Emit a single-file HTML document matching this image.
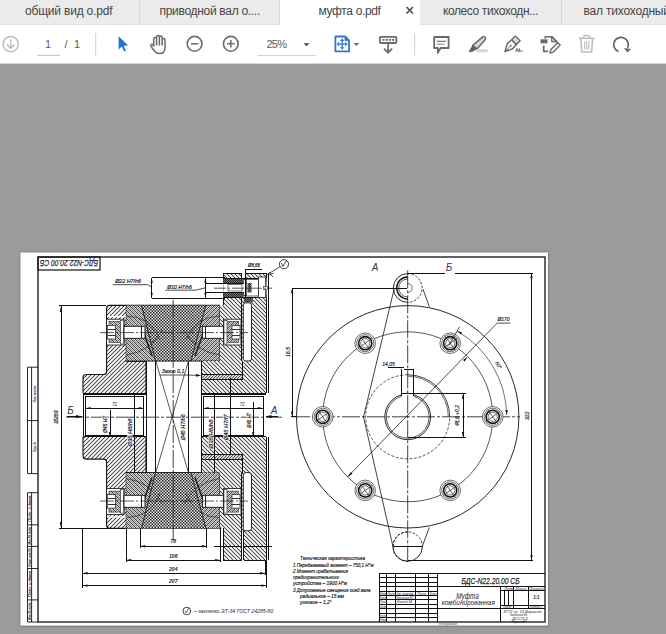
<!DOCTYPE html>
<html><head><meta charset="utf-8">
<style>
*{margin:0;padding:0;box-sizing:border-box}
html,body{width:666px;height:634px;overflow:hidden;background:#9b9b9b;font-family:"Liberation Sans",sans-serif}
#tabs{position:absolute;left:0;top:0;width:666px;height:25px;background:#ebebeb;border-bottom:1px solid #dedede}
.tab{position:absolute;top:0;height:25px;font-size:12px;letter-spacing:-0.2px;color:#464646;line-height:25px;white-space:nowrap;overflow:hidden}
.tab span{position:absolute;top:-1px}
.tab.sep{border-right:1px solid #d6d6d6}
.tab.active{background:#fff;height:26px}
#tb{position:absolute;left:0;top:25px;width:666px;height:39px;background:#fff;border-bottom:1px solid #d6d6d6}
#page{position:absolute;left:20px;top:252px;width:529px;height:375px;background:#fff;box-shadow:1px 1px 1px rgba(0,0,0,.3)}
svg{position:absolute;left:0;top:0}
</style></head><body>
<div id="tabs">
 <div class="tab sep" style="left:0;width:140px"><span style="left:25px">общий вид о.pdf</span></div>
 <div class="tab sep" style="left:140px;width:140px"><span style="left:19.5px;letter-spacing:-0.3px">приводной вал о....</span></div>
 <div class="tab active" style="left:280px;width:140px"><span style="left:38.5px;letter-spacing:-0.35px">муфта о.pdf</span></div>
 <div class="tab sep" style="left:420px;width:142px"><span style="left:23px;letter-spacing:-0.4px">колесо тихоходн...</span></div>
 <div class="tab" style="left:562px;width:104px"><span style="left:21.5px">вал тихоходный</span></div>
</div>
<div id="tb"></div>
<svg width="666" height="64" style="pointer-events:none">
 <!-- close x -->
 <path d="M406.5 7 L413 13.5 M413 7 L406.5 13.5" stroke="#4a4a4a" stroke-width="1.6"/>
 <!-- toolbar -->
 <g transform="translate(0,0)">
  <circle cx="10.7" cy="44.2" r="7.6" fill="none" stroke="#bcbcbc" stroke-width="1.5"/>
  <path d="M10.7 39.5 V48 M7 44.6 L10.7 48.3 L14.4 44.6" fill="none" stroke="#bcbcbc" stroke-width="1.5"/>
  <line x1="37" y1="55.3" x2="60" y2="55.3" stroke="#bdbdbd" stroke-width="1"/>
  <line x1="95.7" y1="33" x2="95.7" y2="55.5" stroke="#d0d0d0" stroke-width="1"/>
  <path d="M118.6 36.3 L118.6 49.6 L121.8 46.6 L124.2 51.6 L126 50.7 L123.7 45.7 L128.2 45.5 Z" fill="#2375d4"/>
  <!-- hand -->
  <path d="M153.8,46.5 V38.9 a1.4,1.4 0 0 1 2.8,0 V45 V36.9 a1.4,1.4 0 0 1 2.8,0 V45 V37.5 a1.4,1.4 0 0 1 2.8,0 V45 V39.8 a1.4,1.4 0 0 1 2.8,0 V47.5 C165,51.3 162.8,53.6 159.4,53.6 C157,53.6 155.6,52.6 154.2,50.8 L150.9,46.2 C150.1,45 151.5,43.5 152.7,44.7 L153.8,46.5" fill="none" stroke="#6a6a6a" stroke-width="1.5" stroke-linejoin="round"/>
  <circle cx="194.6" cy="43.8" r="7.4" fill="none" stroke="#6e6e6e" stroke-width="1.6"/>
  <line x1="191" y1="43.8" x2="198.3" y2="43.8" stroke="#6e6e6e" stroke-width="1.6"/>
  <circle cx="230.8" cy="43.8" r="7.4" fill="none" stroke="#6e6e6e" stroke-width="1.6"/>
  <path d="M227 43.8 H234.6 M230.8 40 V47.6" stroke="#6e6e6e" stroke-width="1.6"/>
  <line x1="257.5" y1="55.6" x2="316" y2="55.6" stroke="#cfcfcf" stroke-width="1"/>
  <path d="M303.6 43.2 H309.4 L306.5 46.2 Z" fill="#4a4a4a"/>
  <!-- blue page -->
  <path d="M335.4 36.5 H345.2 L349 40.3 V51.4 H335.4 Z" fill="none" stroke="#2a78d4" stroke-width="1.8" stroke-linejoin="round"/>
  <path d="M345 36.6 L348.9 40.5 H345 Z" fill="#2a78d4" stroke="#2a78d4" stroke-width="0.9" stroke-linejoin="round"/>
  <path d="M342.2 38.6 L344.5 41 H339.9 Z M342.2 49.6 L344.5 47.2 H339.9 Z M336.7 44.1 L339.1 41.8 V46.4 Z M347.7 44.1 L345.3 41.8 V46.4 Z" fill="#2a78d4"/>
  <path d="M342.2 40.5 V47.7 M338.6 44.1 H345.8" stroke="#2a78d4" stroke-width="1.3"/>
  <path d="M353.5 43 H359.3 L356.4 46 Z" fill="#2a78d4"/>
  <!-- stamp -->
  <rect x="379.8" y="36.8" width="16.6" height="6.2" rx="0.9" fill="none" stroke="#6a6a6a" stroke-width="1.8"/>
  <path d="M382.4 39.9 H394.2" stroke="#6a6a6a" stroke-width="1.9" stroke-dasharray="2.2 1"/>
  <path d="M388.1 43.2 V52.3 M384 48.6 L388.1 52.7 L392.2 48.6" fill="none" stroke="#6a6a6a" stroke-width="1.7"/>
  <line x1="414.6" y1="33" x2="414.6" y2="55.5" stroke="#d0d0d0" stroke-width="1"/>
  <!-- comment -->
  <path d="M434.2 37 H448.6 V48 H440.6 L437.8 52.8 V48 H434.2 Z" fill="none" stroke="#6a6a6a" stroke-width="1.8" stroke-linejoin="round"/>
  <line x1="436.8" y1="41.3" x2="446" y2="41.3" stroke="#6a6a6a" stroke-width="1.1"/>
  <line x1="436.8" y1="44.2" x2="444.5" y2="44.2" stroke="#a0a0a0" stroke-width="1.4"/>
  <!-- highlighter -->
  <path d="M472.6 45.6 L482.6 36.9 C483.8 35.9 486.4 37.9 485.5 39.3 L477 48.9 Z" fill="#dadada" stroke="#6a6a6a" stroke-width="1.5" stroke-linejoin="round"/>
  <path d="M472.6 45.6 L469 51.6 L471.6 51.8 L477 48.9 Z" fill="#5e5e5e" stroke="#5e5e5e" stroke-width="0.6" stroke-linejoin="round"/>
  <rect x="476.5" y="49.3" width="11" height="3" fill="#d6d6d6"/>
  <!-- pen nib -->
  <path d="M505 51.5 L507.4 43.6 L511.6 39.7 L516.4 44.5 L512.6 48.8 Z" fill="none" stroke="#6a6a6a" stroke-width="1.5" stroke-linejoin="round"/>
  <path d="M511.6 39.7 L515.3 36 L520.1 40.8 L516.4 44.5 Z" fill="#d8d8d8" stroke="#6a6a6a" stroke-width="1.3" stroke-linejoin="round"/>
  <path d="M505 51.5 L510.2 46.3" stroke="#6a6a6a" stroke-width="1"/>
  <circle cx="510.7" cy="45.8" r="1" fill="#6a6a6a"/>
  <path d="M515.6 51.8 L517.2 48.3 L518.8 51.8 M516.2 50.6 H518.2 M519.6 51.8 V48.3 M520.3 51.8 C521.2 49.9 522.4 50.4 522.7 51.8" fill="none" stroke="#6a6a6a" stroke-width="1"/>
  <!-- doc edit -->
  <path d="M545.2 38.6 V36.7 H552 L556.6 41.3 V43.3" fill="none" stroke="#6a6a6a" stroke-width="1.6" stroke-linejoin="round"/>
  <path d="M551.7 36.9 V41.5 H556.4 Z" fill="#fff" stroke="#6a6a6a" stroke-width="1.3" stroke-linejoin="round"/>
  <rect x="540.5" y="39.3" width="7" height="4" fill="#6a6a6a"/>
  <path d="M543.7 45.4 V51.4 H548.2" fill="none" stroke="#6a6a6a" stroke-width="1.7"/>
  <path d="M550 53 L550.9 49.6 L557.8 42.7 L560.2 45.1 L553.3 52.1 Z" fill="none" stroke="#6a6a6a" stroke-width="1.4" stroke-linejoin="round"/>
  <!-- trash -->
  <path d="M578.8 38.3 H594.6" stroke="#bdbdbd" stroke-width="1.6"/>
  <path d="M583.8 38.2 V35.6 H589.6 V38.2" fill="none" stroke="#bdbdbd" stroke-width="1.2"/>
  <path d="M580.8 39 L581.8 52 H591.6 L592.6 39" fill="none" stroke="#bdbdbd" stroke-width="1.6" stroke-linejoin="round"/>
  <path d="M584.6 41.2 V49.6 M586.7 41.2 V49.6 M588.8 41.2 V49.6" stroke="#bdbdbd" stroke-width="1.1"/>
  <!-- rotate -->
  <path d="M618.6 51.5 A7.3 7.3 0 1 1 627.6 47.8" fill="none" stroke="#666" stroke-width="1.7"/>
  <path d="M624 48 L631 49 L627.5 52.5 Z" fill="#666"/>
 </g>
</svg>
<div style="position:absolute;left:45px;top:38px;font-size:11px;color:#5a5a5a;line-height:13px">1</div>
<div style="position:absolute;left:64.5px;top:38px;font-size:11px;color:#5a5a5a;line-height:13px">/</div>
<div style="position:absolute;left:74px;top:38px;font-size:11px;color:#5a5a5a;line-height:13px">1</div>
<div style="position:absolute;left:266.5px;top:38px;font-size:11px;letter-spacing:-0.8px;color:#5a5a5a;line-height:13px">25%</div>
<svg width="666" height="634" viewBox="0 0 666 634" style="position:absolute;left:0;top:0">
<defs>
<pattern id="hf" width="4" height="4" patternUnits="userSpaceOnUse"><rect x="0" y="0" width="1" height="1" fill="#d8d8d8"/><rect x="1" y="0" width="1" height="1" fill="#484848"/><rect x="2" y="0" width="1" height="1" fill="#d8d8d8"/><rect x="3" y="0" width="1" height="1" fill="#ffffff"/><rect x="0" y="1" width="1" height="1" fill="#484848"/><rect x="1" y="1" width="1" height="1" fill="#d8d8d8"/><rect x="2" y="1" width="1" height="1" fill="#ffffff"/><rect x="3" y="1" width="1" height="1" fill="#d8d8d8"/><rect x="0" y="2" width="1" height="1" fill="#d8d8d8"/><rect x="1" y="2" width="1" height="1" fill="#ffffff"/><rect x="2" y="2" width="1" height="1" fill="#d8d8d8"/><rect x="3" y="2" width="1" height="1" fill="#484848"/><rect x="0" y="3" width="1" height="1" fill="#ffffff"/><rect x="1" y="3" width="1" height="1" fill="#d8d8d8"/><rect x="2" y="3" width="1" height="1" fill="#484848"/><rect x="3" y="3" width="1" height="1" fill="#d8d8d8"/></pattern>
<pattern id="hb" width="4" height="4" patternUnits="userSpaceOnUse"><rect x="0" y="0" width="1" height="1" fill="#d8d8d8"/><rect x="1" y="0" width="1" height="1" fill="#484848"/><rect x="2" y="0" width="1" height="1" fill="#d8d8d8"/><rect x="3" y="0" width="1" height="1" fill="#ffffff"/><rect x="0" y="1" width="1" height="1" fill="#ffffff"/><rect x="1" y="1" width="1" height="1" fill="#d8d8d8"/><rect x="2" y="1" width="1" height="1" fill="#484848"/><rect x="3" y="1" width="1" height="1" fill="#d8d8d8"/><rect x="0" y="2" width="1" height="1" fill="#d8d8d8"/><rect x="1" y="2" width="1" height="1" fill="#ffffff"/><rect x="2" y="2" width="1" height="1" fill="#d8d8d8"/><rect x="3" y="2" width="1" height="1" fill="#484848"/><rect x="0" y="3" width="1" height="1" fill="#484848"/><rect x="1" y="3" width="1" height="1" fill="#d8d8d8"/><rect x="2" y="3" width="1" height="1" fill="#ffffff"/><rect x="3" y="3" width="1" height="1" fill="#d8d8d8"/></pattern>
<pattern id="ff" width="4" height="4" patternUnits="userSpaceOnUse"><rect x="0" y="0" width="1" height="1" fill="#d0d0d0"/><rect x="1" y="0" width="1" height="1" fill="#909090"/><rect x="2" y="0" width="1" height="1" fill="#d0d0d0"/><rect x="3" y="0" width="1" height="1" fill="#404040"/><rect x="0" y="1" width="1" height="1" fill="#909090"/><rect x="1" y="1" width="1" height="1" fill="#d0d0d0"/><rect x="2" y="1" width="1" height="1" fill="#404040"/><rect x="3" y="1" width="1" height="1" fill="#d0d0d0"/><rect x="0" y="2" width="1" height="1" fill="#d0d0d0"/><rect x="1" y="2" width="1" height="1" fill="#404040"/><rect x="2" y="2" width="1" height="1" fill="#d0d0d0"/><rect x="3" y="2" width="1" height="1" fill="#909090"/><rect x="0" y="3" width="1" height="1" fill="#404040"/><rect x="1" y="3" width="1" height="1" fill="#d0d0d0"/><rect x="2" y="3" width="1" height="1" fill="#909090"/><rect x="3" y="3" width="1" height="1" fill="#d0d0d0"/></pattern>
<pattern id="fb" width="4" height="4" patternUnits="userSpaceOnUse"><rect x="0" y="0" width="1" height="1" fill="#404040"/><rect x="1" y="0" width="1" height="1" fill="#d0d0d0"/><rect x="2" y="0" width="1" height="1" fill="#909090"/><rect x="3" y="0" width="1" height="1" fill="#d0d0d0"/><rect x="0" y="1" width="1" height="1" fill="#d0d0d0"/><rect x="1" y="1" width="1" height="1" fill="#404040"/><rect x="2" y="1" width="1" height="1" fill="#d0d0d0"/><rect x="3" y="1" width="1" height="1" fill="#909090"/><rect x="0" y="2" width="1" height="1" fill="#909090"/><rect x="1" y="2" width="1" height="1" fill="#d0d0d0"/><rect x="2" y="2" width="1" height="1" fill="#404040"/><rect x="3" y="2" width="1" height="1" fill="#d0d0d0"/><rect x="0" y="3" width="1" height="1" fill="#d0d0d0"/><rect x="1" y="3" width="1" height="1" fill="#909090"/><rect x="2" y="3" width="1" height="1" fill="#d0d0d0"/><rect x="3" y="3" width="1" height="1" fill="#404040"/></pattern>
<pattern id="kn" width="3" height="3" patternUnits="userSpaceOnUse"><rect x="0" y="0" width="1" height="1" fill="#1c1c1c"/><rect x="1" y="0" width="1" height="1" fill="#8a8a8a"/><rect x="2" y="0" width="1" height="1" fill="#f2f2f2"/><rect x="0" y="1" width="1" height="1" fill="#8a8a8a"/><rect x="1" y="1" width="1" height="1" fill="#8a8a8a"/><rect x="2" y="1" width="1" height="1" fill="#8a8a8a"/><rect x="0" y="2" width="1" height="1" fill="#f2f2f2"/><rect x="1" y="2" width="1" height="1" fill="#8a8a8a"/><rect x="2" y="2" width="1" height="1" fill="#1c1c1c"/></pattern>
<pattern id="dk" width="2" height="2" patternUnits="userSpaceOnUse"><rect x="0" y="0" width="1" height="1" fill="#2a2a2a"/><rect x="1" y="0" width="1" height="1" fill="#707070"/><rect x="0" y="1" width="1" height="1" fill="#707070"/><rect x="1" y="1" width="1" height="1" fill="#2a2a2a"/></pattern><pattern id="bush" width="3" height="3" patternUnits="userSpaceOnUse"><rect x="0" y="0" width="1" height="1" fill="#5a5a5a"/><rect x="1" y="0" width="1" height="1" fill="#c0c0c0"/><rect x="2" y="0" width="1" height="1" fill="#e8e8e8"/><rect x="0" y="1" width="1" height="1" fill="#c0c0c0"/><rect x="1" y="1" width="1" height="1" fill="#e8e8e8"/><rect x="2" y="1" width="1" height="1" fill="#5a5a5a"/><rect x="0" y="2" width="1" height="1" fill="#e8e8e8"/><rect x="1" y="2" width="1" height="1" fill="#5a5a5a"/><rect x="2" y="2" width="1" height="1" fill="#c0c0c0"/></pattern>
</defs>

<rect x="20" y="252" width="528.5" height="374" fill="#fff" stroke="#7a7a7a" stroke-width="0.8"/><path d="M548.6,253 V626.6 H21" fill="none" stroke="#808080" stroke-width="1"/>
<rect x="38" y="257" width="507" height="365" fill="none" stroke="#111" stroke-width="1.3"/>
<rect x="38" y="257" width="62" height="13" fill="none" stroke="#111" stroke-width="1.2"/>
<text transform="translate(69,263.4) rotate(180)" text-anchor="middle" dominant-baseline="central" font-family="Liberation Sans" font-style="italic" font-size="9.8" fill="#223" stroke="#223" stroke-width="0.25" textLength="58" lengthAdjust="spacingAndGlyphs">БДС-N22.20.00 СБ</text>
<path d="M27.5 367.2 H38 M27.5 420.6 H38 M27.5 473.6 H38 M27.5 367.2 V473.6 M31.6 367.2 V473.6" stroke="#111" stroke-width="0.9" fill="none"/>
<path d="M27.5 492.7 H38 M27.5 524.8 H38 M27.5 546.4 H38 M27.5 568.5 H38 M27.5 599.9 H38 M27.5 492.7 V622 M31.6 492.7 V622 M27.5 622 H38" stroke="#111" stroke-width="0.9" fill="none"/>
<text transform="translate(36.2,394) rotate(-90)" text-anchor="middle" font-family="Liberation Sans" font-style="italic" font-size="4.2" fill="#334" stroke="#334" stroke-width="0.12" textLength="17" lengthAdjust="spacingAndGlyphs">Перв. примен.</text>
<text transform="translate(36.2,447) rotate(-90)" text-anchor="middle" font-family="Liberation Sans" font-style="italic" font-size="4.2" fill="#334" stroke="#334" stroke-width="0.12" textLength="10" lengthAdjust="spacingAndGlyphs">Справ. №</text>
<text transform="translate(31.2,508.7) rotate(-90)" text-anchor="middle" font-family="Liberation Sans" font-style="italic" font-size="4.2" fill="#334" stroke="#334" stroke-width="0.15" textLength="26" lengthAdjust="spacingAndGlyphs">Подп. и дата</text>
<text transform="translate(31.2,535.6) rotate(-90)" text-anchor="middle" font-family="Liberation Sans" font-style="italic" font-size="4.2" fill="#334" stroke="#334" stroke-width="0.15" textLength="18" lengthAdjust="spacingAndGlyphs">Инв.№ дубл.</text>
<text transform="translate(31.2,557.4) rotate(-90)" text-anchor="middle" font-family="Liberation Sans" font-style="italic" font-size="4.2" fill="#334" stroke="#334" stroke-width="0.15" textLength="18" lengthAdjust="spacingAndGlyphs">Взам. инв.№</text>
<text transform="translate(31.2,584.2) rotate(-90)" text-anchor="middle" font-family="Liberation Sans" font-style="italic" font-size="4.2" fill="#334" stroke="#334" stroke-width="0.15" textLength="26" lengthAdjust="spacingAndGlyphs">Подп. и дата</text>
<text transform="translate(31.2,611) rotate(-90)" text-anchor="middle" font-family="Liberation Sans" font-style="italic" font-size="4.2" fill="#334" stroke="#334" stroke-width="0.15" textLength="18" lengthAdjust="spacingAndGlyphs">Инв.№ подл.</text>
<path d="M106.6,308.4 Q106.6,305.4 109.6,305.4 H126.3 V361.1 H146 V393.1 H83 V377.5 Q83,374.5 86,374.5 H103.6 Q106.6,374.5 106.6,371.5 Z" fill="url(#hf)"/>
<path d="M106.6,308.4 Q106.6,305.4 109.6,305.4 H220 M126.3,305.4 V361.1 H146 V393.1 M83,393.1 V377.5 Q83,374.5 86,374.5 H103.6 Q106.6,374.5 106.6,371.5 V308.4" fill="none" stroke="#111" stroke-width="1.1" />
<rect x="107.2" y="316" width="18.6" height="1.2" fill="#fff"/>
<rect x="221" y="316" width="19.6" height="1.2" fill="#fff"/>
<path d="M126.3,305.4 H141.5 L155.5,361.1 H126.3 Z" fill="url(#fb)"/>
<path d="M205.9,305.4 H219.9 V361.1 H191 Z" fill="url(#ff)"/>
<path d="M141.5,305.4 H205.9 L191,361.1 H155.5 Z" fill="url(#kn)"/>
<path d="M141.5,305.4 L155.5,361.1 M205.9,305.4 L191,361.1 M126.3,361.1 H219.9 V305.4" fill="none" stroke="#111" stroke-width="0.9" />
<path d="M126.3,316 Q150,316 160,340 M126.3,355 Q150,352 162,330 M219.9,316 Q196,316 186,340 M219.9,355 Q196,352 184,330" fill="none" stroke="#333" stroke-width="0.75" />
<path d="M141.5,326 L152,356 M205.9,326 L195,356" fill="none" stroke="#222" stroke-width="1.6" />
<path d="M220,305.4 H223.3 V273.3 H266.4 V393.1 H201.4 V361.1 H220 Z" fill="url(#hb)"/>
<rect x="201.4" y="374.2" width="41.5" height="4.8" fill="url(#bush)"/>
<path d="M201.4,374.2 H242.9 V361.1 M201.4,379 H242.9 V374.2 M201.4,361.1 V393.1 H266.4 M266.4,273.3 V393.1 M223.3,273.3 H241.6 M245.2,273.3 H266.4 M223.3,273.3 V305.4" fill="none" stroke="#111" stroke-width="1.0" shape-rendering="crispEdges" />
<path d="M268.2,273.3 V393.1" fill="none" stroke="#111" stroke-width="1.0" shape-rendering="crispEdges" />
<rect x="243.3" y="302.8" width="8.2" height="58.19999999999999" rx="2.5" fill="#fff" stroke="#111" stroke-width="0.9"/>
<path d="M241.4,278 V361.1" fill="none" stroke="#111" stroke-width="1.0" shape-rendering="crispEdges" />
<rect x="106.6" y="319.2" width="17.6" height="25.80000000000001" fill="#fff" stroke="#111" stroke-width="0.8"/>
<rect x="109" y="321.5" width="13" height="21" fill="url(#fb)" stroke="#222" stroke-width="0.6"/>
<rect x="107.5" y="325.5" width="8" height="13.5" fill="#fff" stroke="#222" stroke-width="0.7"/>
<path d="M107.5,329 H115.5 M107.5,335.5 H115.5" fill="none" stroke="#333" stroke-width="1.0" shape-rendering="crispEdges" />
<rect x="120.5" y="320.5" width="3" height="23.5" fill="#fff" stroke="#222" stroke-width="0.6"/>
<rect x="124" y="326.3" width="21" height="12" fill="#fff" stroke="#111" stroke-width="0.9"/>
<path d="M141,326.3 V338.3" fill="none" stroke="#222" stroke-width="1.0" shape-rendering="crispEdges" />
<rect x="223.5" y="319.2" width="17.5" height="25.80000000000001" fill="#fff" stroke="#111" stroke-width="0.8"/>
<rect x="225.5" y="321.5" width="13" height="21" fill="url(#ff)" stroke="#222" stroke-width="0.6"/>
<rect x="232" y="325.5" width="8" height="13.5" fill="#fff" stroke="#222" stroke-width="0.7"/>
<path d="M232,329 H240 M232,335.5 H240" fill="none" stroke="#333" stroke-width="1.0" shape-rendering="crispEdges" />
<rect x="224" y="320.5" width="3" height="23.5" fill="#fff" stroke="#222" stroke-width="0.6"/>
<rect x="202.4" y="326.3" width="21" height="12" fill="#fff" stroke="#111" stroke-width="0.9"/>
<path d="M205.4,326.3 V338.3" fill="none" stroke="#222" stroke-width="1.0" shape-rendering="crispEdges" />
<path d="M100,332.6 H248" fill="none" stroke="#222" stroke-width="0.75" stroke-dasharray="14 2 2 2"/>
<path d="M106.6,525.2 Q106.6,528.2 109.6,528.2 H126.3 V472.5 H146 V436.9 H83 V456.1 Q83,459.1 86,459.1 H103.6 Q106.6,459.1 106.6,462.1 Z" fill="url(#hf)"/>
<path d="M106.6,525.2 Q106.6,528.2 109.6,528.2 H220 M126.3,528.2 V472.5 H146 V436.9 M83,436.9 V456.1 Q83,459.1 86,459.1 H103.6 Q106.6,459.1 106.6,462.1 V525.2" fill="none" stroke="#111" stroke-width="1.1" />
<rect x="107.2" y="516.4" width="18.6" height="1.2" fill="#fff"/>
<rect x="221" y="516.4" width="19.6" height="1.2" fill="#fff"/>
<path d="M126.3,528.2 H141.5 L155.5,472.5 H126.3 Z" fill="url(#fb)"/>
<path d="M205.9,528.2 H219.9 V472.5 H191 Z" fill="url(#ff)"/>
<path d="M141.5,528.2 H205.9 L191,472.5 H155.5 Z" fill="url(#kn)"/>
<path d="M141.5,528.2 L155.5,472.5 M205.9,528.2 L191,472.5 M126.3,472.5 H219.9 V528.2" fill="none" stroke="#111" stroke-width="0.9" />
<path d="M126.3,517.6 Q150,517.6 160,493.6 M126.3,478.6 Q150,481.6 162,503.6 M219.9,517.6 Q196,517.6 186,493.6 M219.9,478.6 Q196,481.6 184,503.6" fill="none" stroke="#333" stroke-width="0.75" />
<path d="M141.5,507.6 L152,477.6 M205.9,507.6 L195,477.6" fill="none" stroke="#222" stroke-width="1.6" />
<path d="M220,528.2 H223.3 V560.3 H266.4 V436.9 H201.4 V472.5 H220 Z" fill="url(#hb)"/>
<rect x="201.4" y="454.6" width="41.5" height="4.8" fill="url(#bush)"/>
<path d="M201.4,459.4 H242.9 V472.5 M201.4,454.6 H242.9 V459.4 M201.4,472.5 V436.9 H266.4 M266.4,560.3 V436.9 M223.3,560.3 H241.6 M245.2,560.3 H266.4 M223.3,560.3 V528.2" fill="none" stroke="#111" stroke-width="1.0" shape-rendering="crispEdges" />
<path d="M268.2,560.3 V436.9" fill="none" stroke="#111" stroke-width="1.0" shape-rendering="crispEdges" />
<rect x="243.3" y="472.6" width="8.2" height="58.19999999999993" rx="2.5" fill="#fff" stroke="#111" stroke-width="0.9"/>
<path d="M241.4,555.6 V472.5" fill="none" stroke="#111" stroke-width="1.0" shape-rendering="crispEdges" />
<rect x="106.6" y="488.6" width="17.6" height="25.799999999999955" fill="#fff" stroke="#111" stroke-width="0.8"/>
<rect x="109" y="491.1" width="13" height="21" fill="url(#fb)" stroke="#222" stroke-width="0.6"/>
<rect x="107.5" y="494.6" width="8" height="13.5" fill="#fff" stroke="#222" stroke-width="0.7"/>
<path d="M107.5,504.6 H115.5 M107.5,498.1 H115.5" fill="none" stroke="#333" stroke-width="1.0" shape-rendering="crispEdges" />
<rect x="120.5" y="489.6" width="3" height="23.5" fill="#fff" stroke="#222" stroke-width="0.6"/>
<rect x="124" y="495.3" width="21" height="12" fill="#fff" stroke="#111" stroke-width="0.9"/>
<path d="M141,507.3 V495.3" fill="none" stroke="#222" stroke-width="1.0" shape-rendering="crispEdges" />
<rect x="223.5" y="488.6" width="17.5" height="25.799999999999955" fill="#fff" stroke="#111" stroke-width="0.8"/>
<rect x="225.5" y="491.1" width="13" height="21" fill="url(#ff)" stroke="#222" stroke-width="0.6"/>
<rect x="232" y="494.6" width="8" height="13.5" fill="#fff" stroke="#222" stroke-width="0.7"/>
<path d="M232,504.6 H240 M232,498.1 H240" fill="none" stroke="#333" stroke-width="1.0" shape-rendering="crispEdges" />
<rect x="224" y="489.6" width="3" height="23.5" fill="#fff" stroke="#222" stroke-width="0.6"/>
<rect x="202.4" y="495.3" width="21" height="12" fill="#fff" stroke="#111" stroke-width="0.9"/>
<path d="M205.4,507.3 V495.3" fill="none" stroke="#222" stroke-width="1.0" shape-rendering="crispEdges" />
<path d="M100,501.0 H248" fill="none" stroke="#222" stroke-width="0.75" stroke-dasharray="14 2 2 2"/>
<rect x="223.3" y="278.1" width="20.5" height="4.9" fill="url(#dk)"/>
<rect x="223.3" y="292.5" width="20.5" height="4.9" fill="url(#dk)"/>
<rect x="241.6" y="273.3" width="3.6" height="5" fill="#fff"/>
<rect x="223.3" y="283" width="43" height="9.5" fill="#fff"/>
<rect x="245.2" y="278.1" width="21.2" height="19.3" fill="#fff"/>
<rect x="243.8" y="297.4" width="9" height="5" fill="url(#dk)"/>
<path d="M223.3,278.1 H266.4 M223.3,283 H243.8 M223.3,292.5 H243.8 M223.3,297.4 H266.4 M241.6,273.3 V278.1 M245.2,269 V297.4 H266.4" fill="none" stroke="#111" stroke-width="1.0" shape-rendering="crispEdges" />
<rect x="228" y="284.5" width="14" height="6.5" fill="#fff" stroke="#222" stroke-width="0.6"/>
<rect x="246.5" y="279.5" width="12" height="16.5" fill="#fff" stroke="#222" stroke-width="0.7"/>
<rect x="247.5" y="283" width="4" height="9.5" fill="url(#dk)"/>
<rect x="258.5" y="277" width="7" height="20.5" fill="#fff" stroke="#222" stroke-width="0.8"/>
<rect x="263.5" y="286.5" width="4" height="3" fill="#fff" stroke="#222" stroke-width="0.6"/>
<path d="M214,288.2 H272" fill="none" stroke="#222" stroke-width="0.75" stroke-dasharray="12 2 2 2"/>
<path d="M245.2,269 H261.8" fill="none" stroke="#111" stroke-width="1.0" shape-rendering="crispEdges" />
<path d="M266,275.3 L280.5,266.5" fill="none" stroke="#111" stroke-width="0.75" />
<path d="M269,272 L273,277 M267.5,276 L273.5,273" fill="none" stroke="#111" stroke-width="0.75" />
<circle cx="284" cy="264.2" r="4.6" fill="none" stroke="#111" stroke-width="0.8"/>
<path d="M281.5,263 L283,266.5 L286.5,260.5" fill="none" stroke="#111" stroke-width="0.75" />
<text x="254" y="266.6" text-anchor="middle" font-family="Liberation Sans" font-style="italic" font-size="5.5" fill="#223" stroke="#223" stroke-width="0.2" textLength="12.2" lengthAdjust="spacingAndGlyphs">Ø8,66</text>
<path d="M223.3,560.3 H241.4 M243.6,560.3 H266.4 M214,546.2 H272" fill="none" stroke="#111" stroke-width="1.0" shape-rendering="crispEdges" />
<rect x="241.5" y="530.9" width="2.1" height="29.6" fill="#fff"/>
<path d="M241.5,530.9 V560.3 M243.6,530.9 V560.3" fill="none" stroke="#111" stroke-width="1.0" shape-rendering="crispEdges" />
<path d="M146,361.1 V472.5 M155.8,361.1 V472.5 M188.4,361.1 V472.5 M201.4,393.1 V436.9" fill="none" stroke="#111" stroke-width="1.0" shape-rendering="crispEdges" />
<path d="M155.8,361.1 L188.4,472.5 M188.4,361.1 L155.8,472.5" fill="none" stroke="#222" stroke-width="0.75" />
<path d="M83,393.1 H146 M83,394.6 H146 M85.4,396.4 H143.9 V435.8 H85.4 Z M83,436.9 H146 M83,393.1 V436.9 M146,393.1 V436.9" fill="none" stroke="#111" stroke-width="1.0" shape-rendering="crispEdges" />
<path d="M201.4,393.1 H266.4 M201.4,394.6 H266.4 M203.5,396.4 H263 V435.8 H203.5 Z M201.4,436.9 H266.4" fill="none" stroke="#111" stroke-width="1.0" shape-rendering="crispEdges" />
<path d="M66,417.2 H282" fill="none" stroke="#111" stroke-width="0.8" stroke-dasharray="18 2 3 2"/>
<path d="M173.2,300 V540" fill="none" stroke="#111" stroke-width="0.8" stroke-dasharray="18 2 3 2"/>
<path d="M85.4,408.2 H143.9 M203.5,408.2 H263" fill="none" stroke="#111" stroke-width="1.0" shape-rendering="crispEdges" />
<path d="M85.6,408.2 l5,-1.1 v2.2 Z M143.7,408.2 l-5,-1.1 v2.2 Z M203.7,408.2 l5,-1.1 v2.2 Z M262.8,408.2 l-5,-1.1 v2.2 Z" fill="#111"/>
<text x="114.6" y="405.5" text-anchor="middle" font-family="Liberation Sans" font-style="italic" font-size="4.5" fill="#223">72</text>
<text x="242.3" y="406" text-anchor="middle" font-family="Liberation Sans" font-style="italic" font-size="4.5" fill="#223">72</text>
<path d="M110,410 V437 M134.8,395 V473 M214.7,395 V473 M230.5,378 V455 M253.2,402 V437" fill="none" stroke="#111" stroke-width="1.0" shape-rendering="crispEdges" />
<path d="M110,437 l-1.1,-5 h2.2 Z M253.2,437 l-1.1,-5 h2.2 Z" fill="#111"/>
<text transform="translate(107,424.5) rotate(-90)" text-anchor="middle" font-family="Liberation Sans" font-style="italic" font-size="5.8" fill="#fff" stroke="#fff" stroke-width="1.6" textLength="17" lengthAdjust="spacingAndGlyphs">Ø45 H7</text>
<text transform="translate(107,424.5) rotate(-90)" text-anchor="middle" font-family="Liberation Sans" font-style="italic" font-size="5.8" fill="#223" stroke="#223" stroke-width="0.2" textLength="17" lengthAdjust="spacingAndGlyphs">Ø45 H7</text>
<text transform="translate(131.8,432.5) rotate(-90)" text-anchor="middle" font-family="Liberation Sans" font-style="italic" font-size="5.8" fill="#fff" stroke="#fff" stroke-width="1.6" textLength="28" lengthAdjust="spacingAndGlyphs">Ø35 H8/h8</text>
<text transform="translate(131.8,432.5) rotate(-90)" text-anchor="middle" font-family="Liberation Sans" font-style="italic" font-size="5.8" fill="#223" stroke="#223" stroke-width="0.2" textLength="28" lengthAdjust="spacingAndGlyphs">Ø35 H8/h8</text>
<text transform="translate(184.5,427.3) rotate(-90)" text-anchor="middle" font-family="Liberation Sans" font-style="italic" font-size="5.8" fill="#fff" stroke="#fff" stroke-width="1.6" textLength="26" lengthAdjust="spacingAndGlyphs">Ø45 H7/h6</text>
<text transform="translate(184.5,427.3) rotate(-90)" text-anchor="middle" font-family="Liberation Sans" font-style="italic" font-size="5.8" fill="#223" stroke="#223" stroke-width="0.2" textLength="26" lengthAdjust="spacingAndGlyphs">Ø45 H7/h6</text>
<text transform="translate(212.5,434) rotate(-90)" text-anchor="middle" font-family="Liberation Sans" font-style="italic" font-size="5.8" fill="#fff" stroke="#fff" stroke-width="1.6" textLength="29" lengthAdjust="spacingAndGlyphs">Ø35 H8/h8</text>
<text transform="translate(212.5,434) rotate(-90)" text-anchor="middle" font-family="Liberation Sans" font-style="italic" font-size="5.8" fill="#223" stroke="#223" stroke-width="0.2" textLength="29" lengthAdjust="spacingAndGlyphs">Ø35 H8/h8</text>
<text transform="translate(227.5,427.3) rotate(-90)" text-anchor="middle" font-family="Liberation Sans" font-style="italic" font-size="5.8" fill="#fff" stroke="#fff" stroke-width="1.6" textLength="26" lengthAdjust="spacingAndGlyphs">Ø45 H7/f7</text>
<text transform="translate(227.5,427.3) rotate(-90)" text-anchor="middle" font-family="Liberation Sans" font-style="italic" font-size="5.8" fill="#223" stroke="#223" stroke-width="0.2" textLength="26" lengthAdjust="spacingAndGlyphs">Ø45 H7/f7</text>
<text transform="translate(251.3,420.5) rotate(-90)" text-anchor="middle" font-family="Liberation Sans" font-style="italic" font-size="5.8" fill="#fff" stroke="#fff" stroke-width="1.6" textLength="15" lengthAdjust="spacingAndGlyphs">Ø45 H7</text>
<text transform="translate(251.3,420.5) rotate(-90)" text-anchor="middle" font-family="Liberation Sans" font-style="italic" font-size="5.8" fill="#223" stroke="#223" stroke-width="0.2" textLength="15" lengthAdjust="spacingAndGlyphs">Ø45 H7</text>
<text x="173" y="373.3" text-anchor="middle" font-family="Liberation Sans" font-style="italic" font-size="6" fill="#223" stroke="#223" stroke-width="0.2" textLength="22.5" lengthAdjust="spacingAndGlyphs">Зазор 0,1</text>
<path d="M160,375 H186 L199,375.4" fill="none" stroke="#111" stroke-width="0.75" />
<path d="M201,375.4 L196,374 V376.8 Z" fill="#111"/>
<text x="70.5" y="413.5" text-anchor="middle" font-family="Liberation Sans" font-style="italic" font-size="10" fill="#335">Б</text>
<text x="274" y="414" text-anchor="middle" font-family="Liberation Sans" font-style="italic" font-size="10" fill="#335">А</text>
<path d="M67,416.6 H81.5 M266,416.6 H278" fill="none" stroke="#111" stroke-width="1.0" shape-rendering="crispEdges" />
<path d="M82,416.6 L76,415 V418.2 Z M265.5,416.6 L271.5,415 V418.2 Z" fill="#111"/>
<path d="M59.3,305.8 H106 M61,305.8 V528.1 M59,528.1 H125" fill="none" stroke="#111" stroke-width="1.0" shape-rendering="crispEdges" />
<path d="M61,306 L59.8,312 H62.2 Z M61,528 L59.8,522 H62.2 Z" fill="#111"/>
<text transform="translate(58.3,417) rotate(-90)" text-anchor="middle" font-family="Liberation Sans" font-style="italic" font-size="5.8" fill="#223" stroke="#223" stroke-width="0.2" textLength="13" lengthAdjust="spacingAndGlyphs">Ø260</text>
<path d="M151.7,277.5 V298 M151.7,277.5 H225 M151.7,298 H225 M205.4,277.5 V298 M205.4,283.4 H225 M205.4,292.1 H225" fill="none" stroke="#111" stroke-width="1.0" shape-rendering="crispEdges" />
<path d="M151.7,277.7 l-1.1,5 h2.2 Z M151.7,297.8 l-1.1,-5 h2.2 Z M205.4,277.7 l-1.1,5 h2.2 Z M205.4,297.8 l-1.1,-5 h2.2 Z" fill="#111"/>
<path d="M112.7,284.7 H147.8 L151.7,287.3 M165.4,290.2 H195.6 L205.4,287.8" fill="none" stroke="#111" stroke-width="0.75" />
<text x="128.1" y="282.9" text-anchor="middle" font-family="Liberation Sans" font-style="italic" font-size="5.8" fill="#223" stroke="#223" stroke-width="0.2" textLength="25.8" lengthAdjust="spacingAndGlyphs">Ø22 H7/h6</text>
<text x="179.5" y="288.5" text-anchor="middle" font-family="Liberation Sans" font-style="italic" font-size="5.8" fill="#223" stroke="#223" stroke-width="0.2" textLength="24.4" lengthAdjust="spacingAndGlyphs">Ø10 H7/h6</text>
<path d="M140.1,528 V547.5 M206.9,528 V547.5 M126.3,528 V562 M220,528 V562 M82.5,528.2 V588 M265,560.3 V575 M266.6,560.3 V588" fill="none" stroke="#111" stroke-width="1.0" shape-rendering="crispEdges" />
<path d="M140.1,546.2 H206.9 M126.3,560.1 H220 M82.5,573.2 H265 M82.5,585.6 H266.6" fill="none" stroke="#111" stroke-width="1.0" shape-rendering="crispEdges" />
<path d="M140.1,546.2 l5,-1.2 v2.4 Z M206.9,546.2 l-5,-1.2 v2.4 Z" fill="#111"/>
<path d="M126.3,560.1 l5,-1.2 v2.4 Z M220,560.1 l-5,-1.2 v2.4 Z" fill="#111"/>
<path d="M82.5,573.2 l5,-1.2 v2.4 Z M265,573.2 l-5,-1.2 v2.4 Z" fill="#111"/>
<path d="M82.5,585.6 l5,-1.2 v2.4 Z M266.6,585.6 l-5,-1.2 v2.4 Z" fill="#111"/>
<text x="173.3" y="543" text-anchor="middle" font-family="Liberation Sans" font-style="italic" font-weight="bold" font-size="5.2" fill="#223">76</text>
<text x="173.3" y="557.5" text-anchor="middle" font-family="Liberation Sans" font-style="italic" font-weight="bold" font-size="5.2" fill="#223">106</text>
<text x="173.3" y="570.5" text-anchor="middle" font-family="Liberation Sans" font-style="italic" font-weight="bold" font-size="5.2" fill="#223">204</text>
<text x="173.3" y="583" text-anchor="middle" font-family="Liberation Sans" font-style="italic" font-weight="bold" font-size="5.2" fill="#223">207</text>
<circle cx="186.8" cy="611" r="3.8" fill="none" stroke="#111" stroke-width="0.8"/><path d="M185,610.5 L186.3,613 L188.8,607.8" fill="none" stroke="#222" stroke-width="0.6"/>
<text x="194" y="612.6" font-family="Liberation Sans" font-style="italic" font-size="4.6" fill="#223" textLength="79" lengthAdjust="spacingAndGlyphs">– заклепки ЭТ-34 ГОСТ 24285-80</text>
<circle cx="407.7" cy="416.8" r="111.2" fill="none" stroke="#111" stroke-width="0.9" />
<circle cx="407.7" cy="416.8" r="85" fill="none" stroke="#111" stroke-width="0.7" />
<circle cx="407.7" cy="288" r="14.4" fill="#fff" stroke="#111" stroke-width="0" />
<path d="M407.7,273.6 A14.4,14.4 0 0,0 407.7,302.4" fill="none" stroke="#111" stroke-width="0.9"/>
<path d="M407.7,273.6 A14.4,14.4 0 0,1 407.7,302.4" fill="none" stroke="#111" stroke-width="0.8" stroke-dasharray="2.5 1.5"/>
<path d="M407.7,277 A11,11 0 0,0 407.7,299" fill="none" stroke="#111" stroke-width="1.4"/>
<path d="M407.7,279 A9,9 0 0,0 407.7,297" fill="none" stroke="#111" stroke-width="0.7"/>
<path d="M407.7,283.5 A4.5,4.5 0 0,1 407.7,292.5" fill="none" stroke="#111" stroke-width="0.6"/>
<path d="M407.7,531.9 A14.7,14.7 0 0,0 407.7,561.3" fill="none" stroke="#111" stroke-width="0.8" stroke-dasharray="2.5 1.5"/>
<path d="M393.0,546.6 A14.7,14.7 0 0,0 422.4,546.6" fill="none" stroke="#111" stroke-width="0.9"/>
<path d="M393.0,546.6 A14.7,14.7 0 0,1 422.4,546.6" fill="none" stroke="#111" stroke-width="0.8" stroke-dasharray="2.5 1.5"/>
<path d="M393,546.6 H422.4" fill="none" stroke="#111" stroke-width="1.0" shape-rendering="crispEdges" />
<path d="M394.1,289.2 L363.5,417 L393,546.6" fill="none" stroke="#111" stroke-width="0.8" />
<path d="M423,289.2 L429.3,306.6 M422.2,546.6 L429.3,527.5" fill="none" stroke="#111" stroke-width="0.8" />
<path d="M407.7,374.8 A42,42 0 0,1 449.7,416.8" fill="none" stroke="#111" stroke-width="0.8"/>
<path d="M407.7,376.2 A40.6,40.6 0 0,1 448.3,416.8" fill="none" stroke="#111" stroke-width="0.6"/>
<path d="M407.7,374.8 A42,42 0 0,0 365.7,416.8 A42,42 0 0,0 449.7,416.8" fill="none" stroke="#111" stroke-width="0.7" stroke-dasharray="3 1.6"/>
<path d="M413.60,394.67 A22.9,22.9 0 1,1 401.60,394.73" fill="none" stroke="#111" stroke-width="0.9"/>
<path d="M413.60,396.23 A21.4,21.4 0 1,1 401.60,396.29" fill="none" stroke="#111" stroke-width="0.7"/>
<path d="M401.6,395.5 V393.6 H413.6 V395.5" fill="none" stroke="#111" stroke-width="1.0" shape-rendering="crispEdges" />
<path d="M401.6,393.6 V369.4 M413.6,393.6 V369.4 M388,367.5 H404 M404,369.4 H414" fill="none" stroke="#111" stroke-width="1.0" shape-rendering="crispEdges" />
<text x="388.5" y="366.4" text-anchor="middle" font-family="Liberation Sans" font-style="italic" font-size="5" fill="#223" stroke="#223" stroke-width="0.15">14,05</text>
<path d="M413.6,393.6 H466 M407.7,437.1 H466 M463,393.6 V437.1" fill="none" stroke="#111" stroke-width="1.0" shape-rendering="crispEdges" />
<path d="M463,393.8 l-1.2,5 h2.4 Z M463,437 l-1.2,-5 h2.4 Z" fill="#111"/>
<text transform="translate(459,415.5) rotate(-90)" text-anchor="middle" font-family="Liberation Sans" font-style="italic" font-size="5" fill="#223" stroke="#223" stroke-width="0.15">48,8 +0,2</text>
<path d="M292,416.8 H520" fill="none" stroke="#111" stroke-width="0.8" stroke-dasharray="18 2 3 2"/>
<path d="M407.7,270.3 V562" fill="none" stroke="#111" stroke-width="0.8" stroke-dasharray="18 2 3 2"/>
<circle cx="492.7" cy="416.8" r="10.3" fill="#fff" stroke="#111" stroke-width="0.6" />
<circle cx="492.7" cy="416.8" r="8.6" fill="none" stroke="#111" stroke-width="0.6" />
<circle cx="492.7" cy="416.8" r="6.6" fill="none" stroke="#111" stroke-width="1.6" />
<circle cx="492.7" cy="416.8" r="4.6" fill="none" stroke="#111" stroke-width="0.6" />
<path d="M485.7,421.8 L499.7,411.8" fill="none" stroke="#333" stroke-width="0.75" />
<path d="M487.7,409.8 L497.7,423.8" fill="none" stroke="#333" stroke-width="0.75" />
<circle cx="450.2" cy="343.18784067832274" r="10.3" fill="#fff" stroke="#111" stroke-width="0.6" />
<circle cx="450.2" cy="343.18784067832274" r="8.6" fill="none" stroke="#111" stroke-width="0.6" />
<circle cx="450.2" cy="343.18784067832274" r="6.6" fill="none" stroke="#111" stroke-width="1.6" />
<circle cx="450.2" cy="343.18784067832274" r="4.6" fill="none" stroke="#111" stroke-width="0.6" />
<path d="M443.2,348.18784067832274 L457.2,338.18784067832274" fill="none" stroke="#333" stroke-width="0.75" />
<path d="M445.2,336.18784067832274 L455.2,350.18784067832274" fill="none" stroke="#333" stroke-width="0.75" />
<circle cx="365.2" cy="343.1878406783227" r="10.3" fill="#fff" stroke="#111" stroke-width="0.6" />
<circle cx="365.2" cy="343.1878406783227" r="8.6" fill="none" stroke="#111" stroke-width="0.6" />
<circle cx="365.2" cy="343.1878406783227" r="6.6" fill="none" stroke="#111" stroke-width="1.6" />
<circle cx="365.2" cy="343.1878406783227" r="4.6" fill="none" stroke="#111" stroke-width="0.6" />
<path d="M358.2,348.1878406783227 L372.2,338.1878406783227" fill="none" stroke="#333" stroke-width="0.75" />
<path d="M360.2,336.1878406783227 L370.2,350.1878406783227" fill="none" stroke="#333" stroke-width="0.75" />
<circle cx="322.7" cy="416.8" r="10.3" fill="#fff" stroke="#111" stroke-width="0.6" />
<circle cx="322.7" cy="416.8" r="8.6" fill="none" stroke="#111" stroke-width="0.6" />
<circle cx="322.7" cy="416.8" r="6.6" fill="none" stroke="#111" stroke-width="1.6" />
<circle cx="322.7" cy="416.8" r="4.6" fill="none" stroke="#111" stroke-width="0.6" />
<path d="M315.7,421.8 L329.7,411.8" fill="none" stroke="#333" stroke-width="0.75" />
<path d="M317.7,409.8 L327.7,423.8" fill="none" stroke="#333" stroke-width="0.75" />
<circle cx="365.19999999999993" cy="490.4121593216773" r="10.3" fill="#fff" stroke="#111" stroke-width="0.6" />
<circle cx="365.19999999999993" cy="490.4121593216773" r="8.6" fill="none" stroke="#111" stroke-width="0.6" />
<circle cx="365.19999999999993" cy="490.4121593216773" r="6.6" fill="none" stroke="#111" stroke-width="1.6" />
<circle cx="365.19999999999993" cy="490.4121593216773" r="4.6" fill="none" stroke="#111" stroke-width="0.6" />
<path d="M358.19999999999993,495.4121593216773 L372.19999999999993,485.4121593216773" fill="none" stroke="#333" stroke-width="0.75" />
<path d="M360.19999999999993,483.4121593216773 L370.19999999999993,497.4121593216773" fill="none" stroke="#333" stroke-width="0.75" />
<circle cx="450.2" cy="490.4121593216773" r="10.3" fill="#fff" stroke="#111" stroke-width="0.6" />
<circle cx="450.2" cy="490.4121593216773" r="8.6" fill="none" stroke="#111" stroke-width="0.6" />
<circle cx="450.2" cy="490.4121593216773" r="6.6" fill="none" stroke="#111" stroke-width="1.6" />
<circle cx="450.2" cy="490.4121593216773" r="4.6" fill="none" stroke="#111" stroke-width="0.6" />
<path d="M443.2,495.4121593216773 L457.2,485.4121593216773" fill="none" stroke="#333" stroke-width="0.75" />
<path d="M445.2,483.4121593216773 L455.2,497.4121593216773" fill="none" stroke="#333" stroke-width="0.75" />
<path d="M347.59999999999997,476.90000000000003 L497.2,323.1 H510.2" fill="none" stroke="#111" stroke-width="0.75" />
<path d="M347.59999999999997,476.90000000000003 l3.2,-4.8 l1.6,1.6 Z M467.8,356.7 l-3.2,4.8 l-1.6,-1.6 Z" fill="#111"/>
<text x="503.5" y="321.3" text-anchor="middle" font-family="Liberation Sans" font-style="italic" font-size="5" fill="#223" stroke="#223" stroke-width="0.15">Ø170</text>
<path d="M457.20,331.06 A99,99 0 0,1 506.68,415.07" fill="none" stroke="#111" stroke-width="0.6"/>
<path d="M448.70,345.79 L459.70,326.73" fill="none" stroke="#111" stroke-width="0.75" />
<text transform="translate(497,366) rotate(58)" text-anchor="middle" font-family="Liberation Sans" font-style="italic" font-size="5" fill="#223" stroke="#223" stroke-width="0.15">60°</text>
<path d="M457.20,331.06 L462.13,332.52 L460.93,334.60 Z" fill="#111"/>
<path d="M506.68,415.07 L505.40,410.09 L507.80,410.05 Z" fill="#111"/>
<text x="375.2" y="270.5" text-anchor="middle" font-family="Liberation Sans" font-style="italic" font-size="10" fill="#335" >А</text>
<text x="449.1" y="270.5" text-anchor="middle" font-family="Liberation Sans" font-style="italic" font-size="10" fill="#335" >Б</text>
<path d="M407.7,273.1 H444.6 M455.4,273.1 H533.1 M531.5,273.1 V560.4 M407.7,560.4 H533.1" fill="none" stroke="#111" stroke-width="1.0" shape-rendering="crispEdges" />
<path d="M531.5,273.3 l-1.2,5 h2.4 Z M531.5,560.2 l-1.2,-5 h2.4 Z" fill="#111"/>
<text transform="translate(528.5,416) rotate(-90)" text-anchor="middle" font-family="Liberation Sans" font-style="italic" font-size="5.2" fill="#223" stroke="#223" stroke-width="0.15">322</text>
<path d="M292,288 H407 M292.1,288 V416.8 M290.5,416.8 H296" fill="none" stroke="#111" stroke-width="1.0" shape-rendering="crispEdges" />
<path d="M292.1,288.2 l-1.2,5 h2.4 Z M292.1,416.6 l-1.2,-5 h2.4 Z" fill="#111"/>
<text transform="translate(290.3,352) rotate(-90)" text-anchor="middle" font-family="Liberation Sans" font-style="italic" font-size="5.2" fill="#223" stroke="#223" stroke-width="0.15">16,5</text>
<text x="300" y="560.2" font-family="Liberation Sans" font-style="italic" font-size="5.6" fill="#222" stroke="#222" stroke-width="0.18" textLength="65" lengthAdjust="spacingAndGlyphs">Техническая характеристика</text>
<text x="293" y="566.5" font-family="Liberation Sans" font-style="italic" font-size="5.6" fill="#222" stroke="#222" stroke-width="0.18" textLength="80.5" lengthAdjust="spacingAndGlyphs">1 Передаваемый момент – 750,1 Н*м</text>
<text x="293" y="572.8" font-family="Liberation Sans" font-style="italic" font-size="5.6" fill="#222" stroke="#222" stroke-width="0.18" textLength="55" lengthAdjust="spacingAndGlyphs">2 Момент срабатывания</text>
<text x="293" y="579.1" font-family="Liberation Sans" font-style="italic" font-size="5.6" fill="#222" stroke="#222" stroke-width="0.18" textLength="46" lengthAdjust="spacingAndGlyphs">предохранительного</text>
<text x="293" y="585.4" font-family="Liberation Sans" font-style="italic" font-size="5.6" fill="#222" stroke="#222" stroke-width="0.18" textLength="54" lengthAdjust="spacingAndGlyphs">устройства – 1900 Н*м</text>
<text x="293" y="591.7" font-family="Liberation Sans" font-style="italic" font-size="5.6" fill="#222" stroke="#222" stroke-width="0.18" textLength="77.5" lengthAdjust="spacingAndGlyphs">3 Допускаемые смещения осей вала</text>
<text x="300" y="598" font-family="Liberation Sans" font-style="italic" font-size="5.6" fill="#222" stroke="#222" stroke-width="0.18" textLength="44" lengthAdjust="spacingAndGlyphs">радиальное – 15 мм</text>
<text x="300" y="604.3" font-family="Liberation Sans" font-style="italic" font-size="5.6" fill="#222" stroke="#222" stroke-width="0.18" textLength="31.5" lengthAdjust="spacingAndGlyphs">угловое – 1,2°</text>
<path d="M379.3,573.4 H437.4" fill="none" stroke="#111" stroke-width="1.0" shape-rendering="crispEdges" />
<path d="M379.3,577.8 H437.4" fill="none" stroke="#111" stroke-width="1.0" shape-rendering="crispEdges" />
<path d="M379.3,582.2 H437.4" fill="none" stroke="#111" stroke-width="1.0" shape-rendering="crispEdges" />
<path d="M379.3,586.6 H437.4" fill="none" stroke="#111" stroke-width="1.0" shape-rendering="crispEdges" />
<path d="M379.3,591.0 H437.4" fill="none" stroke="#111" stroke-width="1.0" shape-rendering="crispEdges" />
<path d="M379.3,595.4 H437.4" fill="none" stroke="#111" stroke-width="1.0" shape-rendering="crispEdges" />
<path d="M379.3,599.8 H437.4" fill="none" stroke="#111" stroke-width="1.0" shape-rendering="crispEdges" />
<path d="M379.3,604.2 H437.4" fill="none" stroke="#111" stroke-width="1.0" shape-rendering="crispEdges" />
<path d="M379.3,608.6 H437.4" fill="none" stroke="#111" stroke-width="1.0" shape-rendering="crispEdges" />
<path d="M379.3,613.0 H437.4" fill="none" stroke="#111" stroke-width="1.0" shape-rendering="crispEdges" />
<path d="M379.3,617.4 H437.4" fill="none" stroke="#111" stroke-width="1.0" shape-rendering="crispEdges" />
<path d="M379.3,573.4 V622" fill="none" stroke="#111" stroke-width="1.0" shape-rendering="crispEdges" />
<path d="M386.5,573.4 V622" fill="none" stroke="#111" stroke-width="1.0" shape-rendering="crispEdges" />
<path d="M395.5,573.4 V622" fill="none" stroke="#111" stroke-width="1.0" shape-rendering="crispEdges" />
<path d="M415.5,573.4 V622" fill="none" stroke="#111" stroke-width="1.0" shape-rendering="crispEdges" />
<path d="M428.8,573.4 V622" fill="none" stroke="#111" stroke-width="1.0" shape-rendering="crispEdges" />
<path d="M437.4,573.4 V622" fill="none" stroke="#111" stroke-width="1.0" shape-rendering="crispEdges" />
<path d="M437.4,573.4 H545 M437.4,586.4 H545 M437.4,608.3 H545" fill="none" stroke="#111" stroke-width="1.0" shape-rendering="crispEdges" />
<path d="M500.6,586.4 V622 M500.6,590.7 H545 M500.6,605 H545 M500.6,608.5 H545" fill="none" stroke="#111" stroke-width="1.0" shape-rendering="crispEdges" />
<path d="M504.2,590.7 V605 M508.5,590.7 V605 M513.5,586.4 V605 M528.5,586.4 V605 M513.5,605 V608.5 M528.5,605 V608.5" fill="none" stroke="#111" stroke-width="1.0" shape-rendering="crispEdges" />
<text x="490.5" y="583.6" text-anchor="middle" font-family="Liberation Sans" font-style="italic" font-size="9.6" fill="#222" stroke="#222" stroke-width="0.25" textLength="58" lengthAdjust="spacingAndGlyphs">БДС-N22.20.00 СБ</text>
<text x="467.5" y="598.6" text-anchor="middle" font-family="Liberation Sans" font-style="italic" font-size="9" fill="#222" textLength="22.5" lengthAdjust="spacingAndGlyphs">Муфта</text>
<text x="468.3" y="604.8" text-anchor="middle" font-family="Liberation Sans" font-style="italic" font-size="8" fill="#222" textLength="53" lengthAdjust="spacingAndGlyphs">комбинированная</text>
<text x="536.3" y="599" text-anchor="middle" font-family="Liberation Sans" font-style="italic" font-size="4.5" fill="#223" stroke="#223" stroke-width="0.15">1:1</text>
<text x="508.5" y="589.6" text-anchor="middle" font-family="Liberation Sans" font-style="italic" font-size="3.6" fill="#223" textLength="9" lengthAdjust="spacingAndGlyphs">Лит</text>
<text x="521" y="589.6" text-anchor="middle" font-family="Liberation Sans" font-style="italic" font-size="3.6" fill="#223" textLength="11" lengthAdjust="spacingAndGlyphs">Масса</text>
<text x="536.5" y="589.6" text-anchor="middle" font-family="Liberation Sans" font-style="italic" font-size="3.6" fill="#223" textLength="14" lengthAdjust="spacingAndGlyphs">Масштаб</text>
<text x="507" y="607.6" text-anchor="middle" font-family="Liberation Sans" font-style="italic" font-size="3.6" fill="#223" textLength="8" lengthAdjust="spacingAndGlyphs">Лист</text>
<text x="536" y="607.6" text-anchor="middle" font-family="Liberation Sans" font-style="italic" font-size="3.6" fill="#223" textLength="13" lengthAdjust="spacingAndGlyphs">Листов 1</text>
<text x="522.5" y="612.5" text-anchor="middle" font-family="Liberation Sans" font-style="italic" font-size="4" fill="#223" textLength="38" lengthAdjust="spacingAndGlyphs">КГТУ гр. 12 Вариант</text>
<text x="519" y="616" text-anchor="middle" font-family="Liberation Sans" font-style="italic" font-size="4" fill="#223" textLength="18" lengthAdjust="spacingAndGlyphs">Холодов Ю.</text>
<text x="520" y="619.5" text-anchor="middle" font-family="Liberation Sans" font-style="italic" font-size="4" fill="#223" textLength="16" lengthAdjust="spacingAndGlyphs">ДССП-1</text>
<text x="519" y="623" text-anchor="middle" font-family="Liberation Sans" font-style="italic" font-size="4" fill="#223" textLength="14" lengthAdjust="spacingAndGlyphs">Формат А3</text>
<text x="383" y="594.6" text-anchor="middle" font-family="Liberation Sans" font-style="italic" font-size="3.6" fill="#223" textLength="6" lengthAdjust="spacingAndGlyphs">Изм</text>
<text x="391" y="594.6" text-anchor="middle" font-family="Liberation Sans" font-style="italic" font-size="3.6" fill="#223" textLength="7" lengthAdjust="spacingAndGlyphs">Лист</text>
<text x="405.5" y="594.6" text-anchor="middle" font-family="Liberation Sans" font-style="italic" font-size="3.6" fill="#223" textLength="18" lengthAdjust="spacingAndGlyphs">№ докум.</text>
<text x="422" y="594.6" text-anchor="middle" font-family="Liberation Sans" font-style="italic" font-size="3.6" fill="#223" textLength="10" lengthAdjust="spacingAndGlyphs">Подп.</text>
<text x="433" y="594.6" text-anchor="middle" font-family="Liberation Sans" font-style="italic" font-size="3.6" fill="#223" textLength="7" lengthAdjust="spacingAndGlyphs">Дата</text>
<text x="383" y="599" text-anchor="middle" font-family="Liberation Sans" font-style="italic" font-size="3.6" fill="#223" textLength="7" lengthAdjust="spacingAndGlyphs">Разраб</text>
<text x="405" y="599" text-anchor="middle" font-family="Liberation Sans" font-style="italic" font-size="3.6" fill="#223" textLength="18" lengthAdjust="spacingAndGlyphs">Холодов Ю.</text>
<text x="383" y="603.4" text-anchor="middle" font-family="Liberation Sans" font-style="italic" font-size="3.6" fill="#223" textLength="7" lengthAdjust="spacingAndGlyphs">Пров</text>
<text x="405" y="603.4" text-anchor="middle" font-family="Liberation Sans" font-style="italic" font-size="3.6" fill="#223" textLength="16" lengthAdjust="spacingAndGlyphs">Копей М.</text>
<text x="383" y="607.8" text-anchor="middle" font-family="Liberation Sans" font-style="italic" font-size="3.6" fill="#223" textLength="7" lengthAdjust="spacingAndGlyphs">Т.контр</text>
<text x="383" y="616.6" text-anchor="middle" font-family="Liberation Sans" font-style="italic" font-size="3.6" fill="#223" textLength="7" lengthAdjust="spacingAndGlyphs">Н.контр</text>
<text x="383" y="621" text-anchor="middle" font-family="Liberation Sans" font-style="italic" font-size="3.6" fill="#223" textLength="7" lengthAdjust="spacingAndGlyphs">Утв</text>
<text x="448" y="625" text-anchor="middle" font-family="Liberation Sans" font-style="italic" font-size="3.6" fill="#445">Копировал</text>
</svg>
</body></html>
